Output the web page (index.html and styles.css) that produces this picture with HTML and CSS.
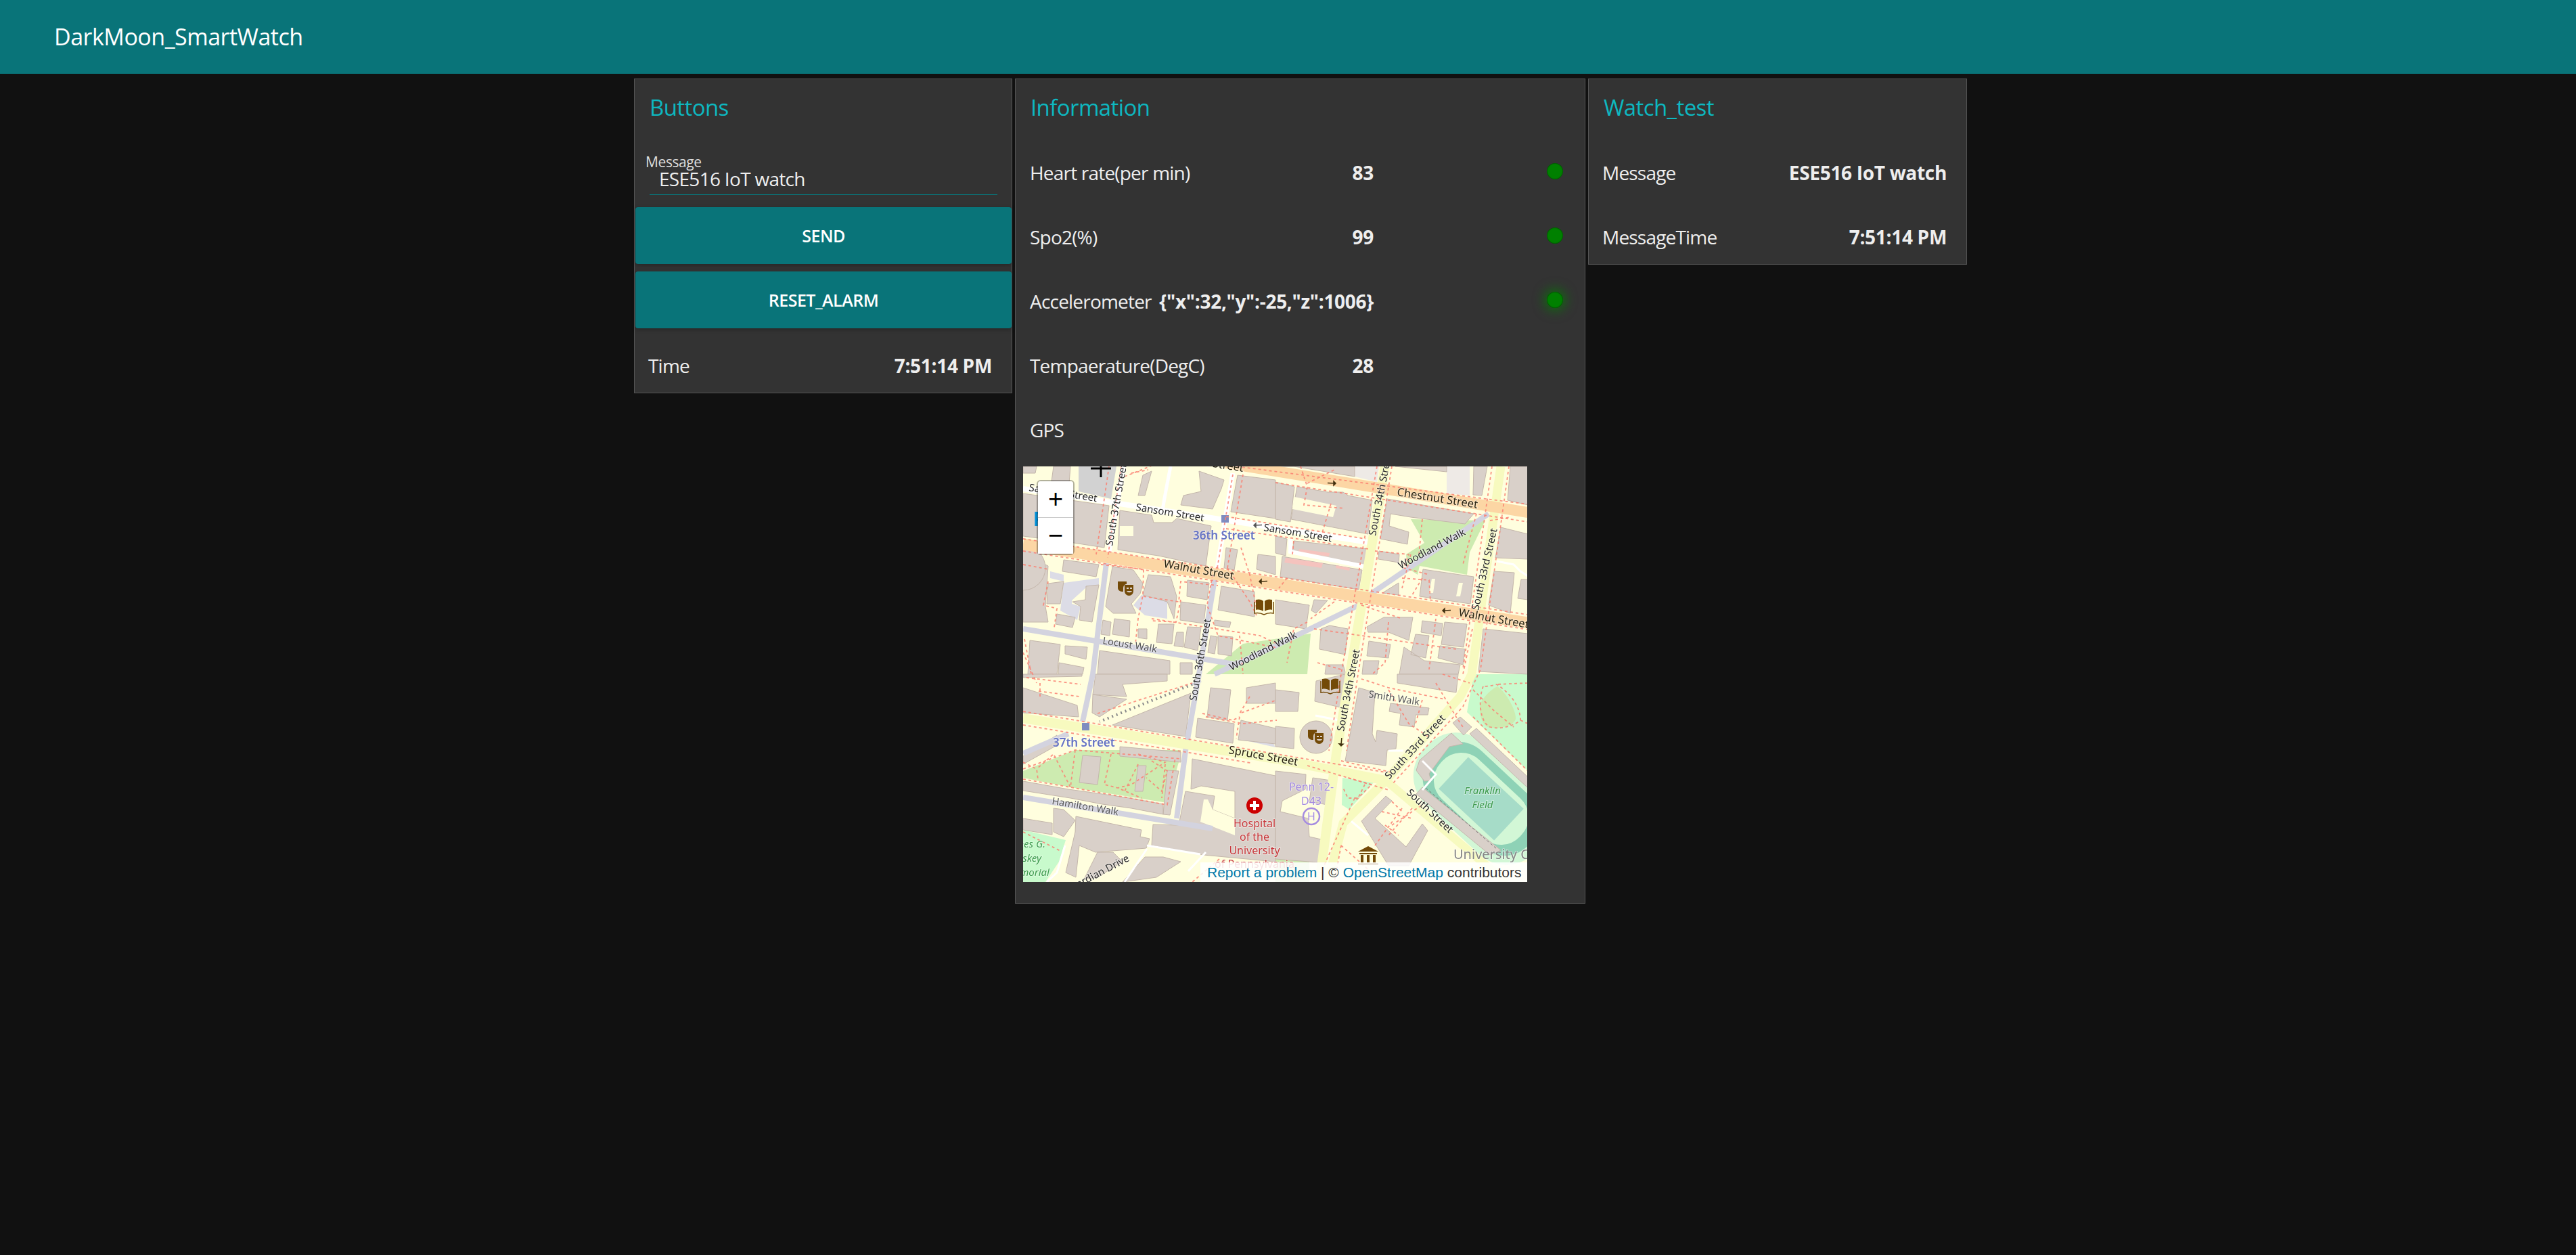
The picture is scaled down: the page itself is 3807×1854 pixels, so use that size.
FILE: index.html
```html
<!DOCTYPE html>
<html lang="en">
<head>
    <meta charset="UTF-8">
    <title>DarkMoon_SmartWatch</title>
    <link rel="stylesheet" href="styles.css">
</head>
<body>

    <header class="toolbar">DarkMoon_SmartWatch</header>

    <div class="layout">

        <!-- Buttons group -->
        <section class="card card-buttons">
            <h2 class="card-title">Buttons</h2>
            <div class="field">
                <label class="field-label" for="message">Message</label>
                <input class="field-input" id="message" type="text" value="ESE516 IoT watch">
            </div>
            <button class="action" type="button">SEND</button>
            <button class="action" type="button">RESET_ALARM</button>
            <div class="row"><span>Time</span><b>7:51:14 PM</b></div>
        </section>

        <!-- Information group -->
        <section class="card card-info">
            <h2 class="card-title">Information</h2>
            <div class="row info-row"><div class="info-body"><span>Heart rate(per min)</span><b>83</b></div><i class="led"></i></div>
            <div class="row info-row"><div class="info-body"><span>Spo2(%)</span><b>99</b></div><i class="led"></i></div>
            <div class="row info-row"><div class="info-body"><span>Accelerometer</span><b>{"x":32,"y":-25,"z":1006}</b></div><i class="led led-glow"></i></div>
            <div class="row info-row"><div class="info-body"><span>Tempaerature(DegC)</span><b>28</b></div></div>
            <div class="row info-row"><div class="info-body"><span>GPS</span></div></div>

            <div class="map">
                <svg class="map-tiles" viewBox="0 0 745 614" width="745" height="614">
                    <defs>
                        <g id="masks">
                            <path class="icon" d="M-12-10h13v4c-3 0-5 2-5 7v4c-5 0-8-2-8-6z"/>
                            <path class="icon" d="M-2-5h13v9c0 4-3 7-6.500 7s-6.500-3-6.500-7z"/>
                            <path class="icon-cut" d="M1-1h3v2h-3zM6-1h3v2h-3zM1 4h8c-1 3-7 3-8 0z"/>
                        </g>
                        <g id="books">
                            <path class="icon" d="M-12-10c4-1 8-1 11 2v15c-3-2-7-3-11-2zM12-10c-4-1-8-1-11 2v15c3-2 7-3 11-2z"/>
                            <path class="icon-line" d="M-14-7v17c5-1 10 0 14 2 4-2 9-3 14-2v-17"/>
                        </g>
                        <path id="arrow" d="M-11-.5l9 .5v-3l3 3-3 3v-3" />
                    </defs>

                    <rect class="land" width="745" height="614"/>

                    <!-- parks and sport -->
                    <path class="park" d="M0 450L77 419 233 419 230 437 213 497 70 474 0 460zM573 78L683 80 660 127 656 160 586 147 583 160 568 150 566 130 593 113zM270 307L325 262 425 247 420 307zM373 620L373 570 423 553 423 620z"/>
                    <path class="grass" d="M666 307H746V450L656 363zM0 537L63 552 53 584 33 614H0zM472 460L518 467 482 507 471 500z"/>
                    <path class="park" d="M701 325C715 335 728 360 728 372 728 380 712 388 690 386 680 384 674 370 675 355 676 345 690 330 701 325z"/>
                    <g transform="translate(677 491) rotate(43)">
                        <rect class="field-edge" x="-112" y="-62" width="224" height="124" rx="58"/>
                        <rect class="field-track" x="-98" y="-52" width="196" height="104" rx="50"/>
                        <rect class="field-edge" x="-80" y="-40" width="160" height="80" rx="38"/>
                        <rect class="field-pitch" x="-56" y="-32" width="112" height="64"/>
                    </g>

                    <!-- footways with a wide surface -->
                    <path class="plaza" d="M40 155L60 160 60 172 112 165 112 175 92 180 72 198 72 203 85 207 80 227 55 213 60 170 40 165zM163 205L175 190 213 200 213 225 180 220zM320 390L365 400 373 415 320 403z"/>
                    <path class="light" d="M490 0H526L523 23 490 15zM626 0H660V43L626 40z"/>
                    <path class="lot" d="M82 0H138L130 48 82 37z"/>

                    <!-- buildings -->
                    <g class="bld">
                        <path d="M0 40L127 58 120 120 75 113 0 103zM143 65L190 72 193 83 220 83 227 77 278 88 270 147 200 132 140 123zM260 7L297 20 293 33 280 63 233 57 237 43 263 37zM317 13L373 20V77L307 67zM177 13L190 7 180 43 170 43zM0 0H20L18 10 0 10zM45 0H70L68 25 42 22z"/>
                        <path d="M0 130L37 147 33 207 37 230 0 230zM37 173L60 170 55 203 35 203zM60 138L112 145 108 163 58 155zM73 200L92 197 93 177 112 175 102 230 83 227 85 207zM50 218L77 223 73 238 48 233zM132 148L163 153 177 173 173 188 160 203 167 217 133 217 122 207zM185 160L218 163 227 192 223 225 213 200 177 190zM243 168L275 172 272 197 242 192zM233 200L270 205 267 232 232 227zM293 177L342 185 342 222 288 212zM347 130L373 133V160L345 152zM300 120L317 123 312 153 297 150z"/>
                        <path d="M118 227L130 230 128 250 115 248zM135 225L158 228 157 252 132 248zM170 240L183 240 183 255 170 253zM200 233L223 233 220 262 197 260zM227 245L237 245 237 267 223 265zM243 237L263 238 258 272 238 267zM288 250L310 252 308 280 288 277zM277 250L287 252 283 277 273 275zM10 257L55 263 50 307H7zM62 265L95 267 93 285 62 277zM113 272L217 287 217 307 110 307zM53 290L90 297 88 307 52 307zM232 290L250 290 250 307 232 307zM283 227L307 230 305 238 283 235z"/>
                        <path d="M373 23L401 30 395 82 373 78zM405 30L450 38 473 38 480 43 516 50 510 100 396 78zM373 0H490V15L400 0zM550 0H626V8zM666 0H686L678 43 665 42zM720 0H746V57L716 50zM538 48L666 70 653 85 573 75 543 70 541 88 570 97 568 115 528 107z"/>
                        <path d="M373 103L390 107 388 132 373 128zM400 110L510 122 506 148 398 128zM383 133L501 153 496 182 380 163zM526 125L556 130 555 142 525 137zM591 152L666 163 661 203 586 192zM531 187L555 172V190zM706 90L746 100V137L698 135zM696 155L726 157 720 217 688 205zM736 167H746V197L731 195z"/>
                        <path d="M373 197L423 205 418 240 373 233zM430 197L450 198 433 217 426 213zM440 240L453 235 480 240 476 278 438 270zM508 237L533 223H576L570 257 540 245 510 245zM511 258L543 263 540 283 508 280zM590 228L620 232 618 250 588 245zM623 230L656 233 651 267 618 263zM580 248L600 250 595 283 573 278zM616 265L653 270 650 293 613 283zM563 267L593 287 646 293 643 307H556zM680 240L746 247V307L673 303zM448 293L473 293 477 307H446zM503 287L526 287 523 307H501z"/>
                        <path d="M0 327L80 353 82 370 0 364zM107 307H213V317L147 322 153 340 103 337zM103 337L153 344 113 370 102 364zM132 382L248 335 240 399zM0 307H87V310L0 312zM277 327L307 330 302 375 272 370zM258 372L312 380 310 409 255 400zM330 327L373 320V350L330 350zM322 375L373 387V410L318 404z"/>
                        <path d="M0 428L50 397 50 412 0 440zM143 414L233 422 233 437 143 428zM0 465L67 477 117 484 157 490 207 499 207 514 160 505 117 499 70 490 0 479zM88 427L115 429 110 470 83 467zM170 442L182 442 177 480 165 480zM213 449L230 450 217 515 207 514z"/>
                        <path d="M250 432L373 457V584L267 574 190 560 192 529 230 530 240 480 283 487 280 507 313 520 313 480 263 472 248 477zM78 517L175 537 173 547 187 550 182 564 107 570 83 560 78 607 63 600 77 540zM0 520L43 527 43 544 0 537zM45 505L60 507 77 523 60 547 45 540zM110 570H133L147 584 110 607 90 610zM180 577H207L233 584 197 607 147 614z"/>
                        <path d="M373 450L418 455 417 477 383 494 380 510 421 520 423 547 445 552 435 585 373 580zM428 460L455 464 450 500 423 495zM433 317L476 307 473 357 431 347zM373 330L408 334 406 362 373 362zM553 307H643L640 334 553 320zM373 384L401 387 400 417 373 414z"/>
                        <circle cx="433" cy="400" r="24"/>
                        <path d="M496 327L520 334 516 395 521 407 523 390 553 395 551 417 538 419 536 442 476 435zM543 350L600 357 598 367 580 367 578 385 556 382 558 365 541 362zM635 379L646 370 663 385 651 397zM581 449L586 434 633 394 650 410 630 414 600 454 603 464 593 465zM660 395L670 387 746 459V475zM581 484L590 474 706 567 690 574zM500 524L536 487 545 494 520 520 566 562 590 528 598 538 570 590 540 590z"/>
                        <circle cx="0" cy="150" r="33"/>
                    </g>
                    <path class="land" d="M143 88H163V103H143zM401 45L463 58 458 75 398 63zM604 166H609L606 187H600zM644 172H650L646 192H640zM273 492L280 507 313 520 313 545 262 525 267 492z"/>
                    <path class="pink" d="M388 135L443 143 441 150 386 142zM408 122L453 128 452 133 407 127zM463 146L483 150 482 154 462 150z"/>

                    <!-- white service roads -->
                    <g class="road-white">
                        <path class="w8" d="M0 33L510 112"/>
                        <path class="w7" d="M148 0L127 127M310 10L287 150"/>
                        <path class="w5" d="M218 0C212 30 208 50 205 72"/>
                        <path class="w6" d="M395 107V126L505 148"/>
                        <path class="w3" d="M700 140L725 145 735 155 746 162M432 368L467 375M540 420H562M590 435L610 455 590 478M62 560L50 600 35 614M183 560L262 573M150 614L183 565M244 598L270 570M480 520L510 545"/>
                    </g>

                    <!-- walks -->
                    <g class="road-walk">
                        <path class="w8" d="M688 70L516 187 496 205 373 265 283 307"/>
                        <path class="w8" d="M123 143L103 307 88 377M283 167L260 307 240 420 227 520"/>
                        <path class="w8" d="M0 240L317 293M0 489L280 535M0 424L67 395"/>
                        <path class="w4" d="M263 317L250 322"/>
                    </g>
                    <path class="steps" d="M250 322L113 377"/>

                    <!-- streets -->
                    <g class="road-yellow">
                        <path class="w14" d="M535 0L483 307 463 424 438 614"/>
                        <path class="w13" d="M706 0L663 307 646 340 536 464 473 527 450 614"/>
                        <path class="w14" d="M0 372L373 432 536 464"/>
                        <path class="w12" d="M536 464L666 574 715 614"/>
                    </g>
                    <g class="road-main">
                        <path class="w16" d="M300 -5L746 68"/>
                        <path class="w17" d="M0 115L746 231"/>
                    </g>
                    <path class="stop" d="M293 72h11v11h-11zM87 379h11v11h-11z"/>

                    <!-- sidewalks -->
                    <g class="foot">
                        <path d="M300 -2L746 56M373 24L746 82M0 107L746 219M0 125L746 241M300 74L506 107M300 92L510 122"/>
                        <path d="M0 362L536 452M0 382L336 438M420 442L540 478M310 12L287 150M325 12L302 150M127 0L108 130M145 0L125 135"/>
                        <path d="M523 0L470 307 452 420M545 0L495 307 478 420M693 0L650 300M718 0L676 300 650 355 545 470"/>
                        <path d="M2 255L12 307M0 145L37 152M37 170L30 205 50 210 46 238M115 145L178 152 177 190 170 225 166 262M178 192L230 200 233 170 288 176M233 197L226 230 190 228M280 160L272 205 288 250 375 268M190 225L350 250 375 262M320 250L325 307"/>
                        <path d="M160 10L185 5M150 15L200 -5M302 150L335 200 345 220M322 120L335 160 345 210"/>
                        <path d="M400 110L398 130M390 165L378 180M455 55L440 105M520 125L570 130 562 150 600 160M590 78L585 130M573 130L560 180M560 165L600 168 602 200M590 165L575 190"/>
                        <path d="M670 70L650 145M690 80L720 75M420 230L400 240 390 290M430 240L500 250 640 270M540 230L535 290 516 307M610 225L605 262 600 300M664 240L650 307M435 290L470 300M460 200L425 225M500 205L560 225"/>
                        <path d="M0 447L77 419 233 432M0 462L70 474 213 500 225 430M77 419L70 474 45 425 20 447M0 437L20 447 22 462M170 425L210 437 160 470 140 475M130 425L120 470 140 475 175 490M170 440L150 480M210 440L205 490M190 435L213 450 205 480 182 460M5 312L85 322M25 320L25 340M23 332L83 340M110 365L250 320M265 365L310 375 320 370M320 370L315 402M335 340L320 365 375 345M270 370L325 380 375 375"/>
                        <path d="M0 275L20 320M410 0L420 30 415 57 475 62M420 25L460 5M500 314L540 327 623 344M540 330L570 380 600 400M590 345L580 380M470 435L545 452M480 460L515 470 490 495M505 470L495 490 480 490 473 475M620 307L660 320M610 320L640 370 650 385M490 490L440 600"/>
                        <path d="M665 330L695 360 725 385M680 325C672 345 675 378 690 385 710 390 730 380 735 375 735 355 720 335 700 322 690 325 680 325 680 325M746 320L700 322M665 370L746 450M746 380L735 375"/>
                        <path d="M530 510L575 520M545 530L590 500M535 530L555 545M545 495L560 510M575 505L540 545M520 560L560 505M470 560L460 614M470 560L515 600"/>
                        <path d="M0 540L55 568M290 580L250 614"/>
                    </g>
                    <path class="foot-dark" d="M595 475L700 565"/>

                    <!-- map symbols -->
                    <path class="cross" d="M100 3H130M115 -5V16"/>
                    <text class="shield" x="15" y="88">P</text>
                    <use href="#masks" x="152" y="180"/>
                    <use href="#masks" x="433" y="399"/>
                    <use href="#books" x="356" y="207"/>
                    <use href="#books" x="454" y="324"/>
                    <path class="icon" d="M510 561L525 569H495zM497 571H523V573H497zM499 574H503V585H499zM508 574H512V585H508zM517 574H521V585H517zM495 586H525V589H495z"/>
                    <use class="arrow-dark" href="#arrow" transform="translate(461 25)"/>
                    <use class="arrow-grey" href="#arrow" transform="translate(342 87) scale(-1 1)"/>
                    <use class="arrow-dark" href="#arrow" transform="translate(350 170) scale(-1 1)"/>
                    <use class="arrow-dark" href="#arrow" transform="translate(621 213) scale(-1 1)"/>
                    <use class="arrow-dark" href="#arrow" transform="translate(470 412) rotate(92)"/>
                    <circle class="hospital" cx="342" cy="501" r="12"/>
                    <path class="hospital-cross" d="M342 494V508M335 501H349"/>
                    <circle class="heli" cx="426" cy="517" r="12"/>

                    <!-- street names -->
                    <g class="lbl">
                        <text x="8" y="36" transform="rotate(9.200 8 36)">Sansom Street</text>
                        <text x="166" y="65" transform="rotate(9.200 166 65)">Sansom Street</text>
                        <text x="355" y="95" transform="rotate(9.200 355 95)">Sansom Street</text>
                        <text x="132" y="118" transform="rotate(-80 132 118)">South 37th Street</text>
                        <text x="256" y="347" transform="rotate(-80 256 347)">South 36th Street</text>
                        <text x="474" y="392" transform="rotate(-79 474 392)">South 34th Street</text>
                        <text x="521" y="103" transform="rotate(-79 521 103)">South 34th Street</text>
                        <text x="673" y="213" transform="rotate(-77 673 213)">South 33rd Street</text>
                        <text x="541" y="463" transform="rotate(-47 541 463)">South 33rd Street</text>
                        <text x="566" y="483" transform="rotate(43 566 483)">South Street</text>
                        <text x="308" y="302" transform="rotate(-27 308 302)">Woodland Walk</text>
                        <text x="558" y="152" transform="rotate(-28 558 152)">Woodland Walk</text>
                        <text class="lbl-walk" x="117" y="262" transform="rotate(9 117 262)">Locust Walk</text>
                        <text class="lbl-walk" x="42" y="499" transform="rotate(9.500 42 499)">Hamilton Walk</text>
                        <text class="lbl-walk" x="510" y="341" transform="rotate(9 510 341)">Smith Walk</text>
                        <text x="158" y="582" text-anchor="end" transform="rotate(-28 158 582)">Guardian Drive</text>
                    </g>
                    <g class="lbl lbl-big">
                        <text x="207" y="149" transform="rotate(10 207 149)">Walnut Street</text>
                        <text x="643" y="221" transform="rotate(10 643 221)">Walnut Street</text>
                        <text x="552" y="43" transform="rotate(9 552 43)">Chestnut Street</text>
                        <text x="325" y="8" text-anchor="end" transform="rotate(9 325 8)">Chestnut Street</text>
                        <text x="303" y="424" transform="rotate(10 303 424)">Spruce Street</text>
                    </g>
                    <g class="lbl-blue">
                        <text x="251" y="108">36th Street</text>
                        <text x="44" y="414">37th Street</text>
                    </g>
                    <g class="lbl-green">
                        <text x="33" y="563" text-anchor="end">James G.</text>
                        <text x="27" y="584" text-anchor="end">Kaskey</text>
                        <text x="39" y="605" text-anchor="end">Memorial</text>
                        <text x="679" y="484" text-anchor="middle">Franklin</text>
                        <text x="679" y="505" text-anchor="middle">Field</text>
                    </g>
                    <g class="lbl-red">
                        <text x="342" y="533">Hospital</text>
                        <text x="342" y="553">of the</text>
                        <text x="342" y="573">University</text>
                        <text x="342" y="593">of Pennsylvania</text>
                    </g>
                    <g class="lbl-purple">
                        <text x="426" y="479">Penn 12-</text>
                        <text x="426" y="500">D43</text>
                        <text x="426" y="523">H</text>
                    </g>
                    <text class="lbl-grey" x="636" y="580">University City</text>
                </svg>

                <div class="zoom">
                    <a class="zoom-btn zoom-in">+</a>
                    <a class="zoom-btn">&#8722;</a>
                </div>

                <div class="attribution"><a>Report a problem</a> | &copy; <a>OpenStreetMap</a> contributors</div>
            </div>
        </section>

        <!-- Watch_test group -->
        <section class="card card-watch">
            <h2 class="card-title">Watch_test</h2>
            <div class="row"><span>Message</span><b>ESE516 IoT watch</b></div>
            <div class="row"><span>MessageTime</span><b>7:51:14 PM</b></div>
        </section>

    </div>

</body>
</html>
```
FILE: styles.css
```css
/* General Styles */
body {
    font-family: "Open Sans", "Noto Sans", sans-serif;
    background-color: #111;
    color: #eee;
    margin: 0;
    padding: 0;
}

.toolbar {
    height: 109px;
    line-height: 109px;
    padding-left: 80px;
    background-color: #097479;
    color: #fff;
    font-size: 34px;
    letter-spacing: -0.5px;
}

.layout {
    display: flex;
    align-items: flex-start;
    gap: 4px;
    padding: 7px 0 0 937px;
}

.card {
    box-sizing: border-box;
    display: flex;
    flex-direction: column;
    gap: 11px;
    background-color: #333;
    border: 1px solid #555;
}

.card-buttons { width: 559px; }
.card-info { width: 843px; padding-bottom: 31px; }
.card-watch { width: 560px; }

.card-title {
    height: 83px;
    line-height: 83px;
    margin: 0;
    padding-left: 22px;
    color: #0eb8c0;
    font-size: 33px;
    font-weight: 500;
    letter-spacing: -0.6px;
}

/* Rows */
.row {
    box-sizing: border-box;
    display: flex;
    align-items: center;
    justify-content: space-between;
    height: 84px;
    padding: 3px 29px 0 20px;
    font-size: 28px;
    letter-spacing: -0.8px;
}

.row b {
    font-weight: 700;
    letter-spacing: -0.3px;
    white-space: nowrap;
}

.info-row {
    padding-right: 32px;
    padding-left: 21px;
}

.info-body {
    display: flex;
    justify-content: space-between;
    gap: 8px;
    width: 508px;
}

.info-row .led {
    margin-left: auto;
}

.led {
    display: block;
    width: 24px;
    height: 24px;
    margin-top: -3px;
    border-radius: 50%;
    background-color: #008000;
    box-shadow: inset 0 0 2px #020;
}

.led-glow {
    box-shadow: inset 0 0 2px #020, 0 0 16px 5px rgba(0, 128, 0, 0.6);
}

/* Message input */
.field {
    box-sizing: border-box;
    height: 84px;
    padding: 17px 22px 0;
}

.field-label {
    display: block;
    margin-left: -6px;
    font-size: 21px;
    line-height: 22px;
    letter-spacing: -0.4px;
    color: #ddd;
}

.field-input {
    display: block;
    box-sizing: border-box;
    width: 514px;
    height: 38px;
    padding: 0 0 10px 14px;
    border: none;
    border-bottom: 1px solid #097479;
    background: transparent;
    color: #eee;
    font-family: inherit;
    font-size: 28px;
    letter-spacing: -0.7px;
    outline: none;
}

.action {
    width: 556px;
    height: 84px;
    margin: 0 0 0 1px;
    border: none;
    border-radius: 4px;
    background-color: #097479;
    color: #fff;
    font-family: inherit;
    font-size: 25px;
    font-weight: 600;
    letter-spacing: -0.5px;
    box-shadow: 0 2px 6px rgba(0, 0, 0, 0.25);
}

/* Map */
.map {
    position: relative;
    width: 745px;
    height: 614px;
    margin: 3px 0 0 11px;
    overflow: hidden;
}

.map-tiles {
    display: block;
    filter: blur(0.5px);
    font-family: "Noto Sans", "Open Sans", sans-serif;
}

.land { fill: #fffede; }
.park { fill: #cdebb0; }
.grass { fill: #c8facc; }
.field-edge { fill: #d2f7d6; }
.field-track { fill: #8ed2b6; }
.field-pitch { fill: #a6dcc8; }
.plaza { fill: #dcdce6; }
.light { fill: #eeeae6; }
.lot { fill: #d2d2d2; }
.pink { fill: #f5c3be; }

.bld { fill: #d9d0c9; stroke: #c4b6ab; stroke-width: 1; }

.road-white, .road-walk, .road-main, .road-yellow, .foot, .steps, .foot-dark, .cross, .hospital-cross {
    fill: none;
}

.road-white { stroke: #fff; }
.road-walk { stroke: #d3d3df; }
.road-main { stroke: #fcd6a4; }
.road-yellow { stroke: #f7fabf; }

.w3 { stroke-width: 3; }
.w4 { stroke-width: 4; }
.w5 { stroke-width: 5; }
.w6 { stroke-width: 6; }
.w7 { stroke-width: 7; }
.w8 { stroke-width: 8; }
.w12 { stroke-width: 12; }
.w13 { stroke-width: 13; }
.w14 { stroke-width: 14; }
.w16 { stroke-width: 16; }
.w17 { stroke-width: 17; }

.foot { stroke: #fa8072; stroke-width: 1.800; stroke-dasharray: 4 4; stroke-opacity: 0.85; }
.foot-dark { stroke: #777; stroke-width: 1; stroke-dasharray: 4 3; }
.steps { stroke: #8b8b8b; stroke-width: 4; stroke-dasharray: 2 5; }
.stop { fill: #7f8cc0; }

.cross { stroke: #000; stroke-width: 3; }
.shield { fill: #0092da; font-size: 28px; font-weight: 700; }

.icon { fill: #734a08; }
.icon-cut { fill: #d9d0c9; }
.icon-line { fill: none; stroke: #734a08; stroke-width: 1.500; }
.arrow-dark { stroke: #40300f; stroke-width: 1.500; fill: #40300f; }
.arrow-grey { stroke: #555; stroke-width: 1.500; fill: #555; }

.hospital { fill: #c00; }
.hospital-cross { stroke: #fff; stroke-width: 4; }
.heli { fill: none; stroke: #a58ce0; stroke-width: 2.500; }

.lbl text, .lbl-blue, .lbl-green, .lbl-red, .lbl-purple, .lbl-grey {
    paint-order: stroke;
    stroke: rgba(255, 255, 255, 0.4);
    stroke-width: 2px;
}

.lbl { font-size: 15px; fill: #2a2a2a; }
.lbl .lbl-walk { fill: #555; font-size: 14.500px; }
.lbl-big { font-size: 16.500px; fill: #2a2410; }
.lbl-blue { font-size: 17px; font-weight: 600; fill: #6573c4; }
.lbl-green { font-size: 15px; font-style: italic; fill: #3c9a4c; }
.lbl-red { font-size: 16px; fill: #c8383c; text-anchor: middle; }
.lbl-purple { font-size: 16px; fill: #a58ce0; text-anchor: middle; }
.lbl-grey { font-size: 20px; fill: #858585; }

/* Zoom control */
.zoom {
    position: absolute;
    left: 20px;
    top: 20px;
    width: 52px;
    border: 2px solid rgba(0, 0, 0, 0.3);
    border-radius: 6px;
    background-clip: padding-box;
}

.zoom-btn {
    display: block;
    height: 53px;
    background-color: #fff;
    color: #000;
    font-family: "Liberation Sans", sans-serif;
    font-size: 38px;
    line-height: 53px;
    text-align: center;
}

.zoom-in {
    border-bottom: 1px solid #ccc;
    border-radius: 4px 4px 0 0;
}

/* Attribution */
.attribution {
    position: absolute;
    right: 0;
    bottom: 0;
    box-sizing: border-box;
    width: 483px;
    height: 29px;
    padding: 0 6px 0 10px;
    background: rgba(255, 255, 255, 0.85);
    color: #333;
    font-family: "Liberation Sans", sans-serif;
    font-size: 21px;
    line-height: 29px;
    white-space: nowrap;
}

.attribution a {
    color: #0078a8;
}
```
